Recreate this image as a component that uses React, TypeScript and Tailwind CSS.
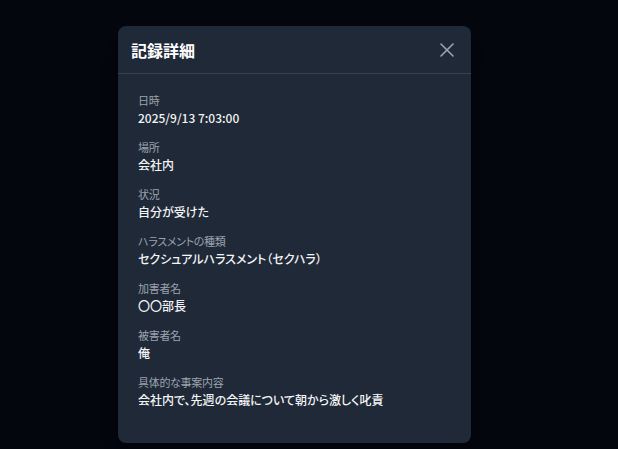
import React from 'react';
import { X } from 'lucide-react';

const rows = [
  { label: '日時', value: '2025/9/13 7:03:00' },
  { label: '場所', value: '会社内' },
  { label: '状況', value: '自分が受けた' },
  { label: 'ハラスメントの種類', value: 'セクシュアルハラスメント（セクハラ）' },
  { label: '加害者名', value: '〇〇部長' },
  { label: '被害者名', value: '俺' },
  { label: '具体的な事案内容', value: '会社内で、先週の会議について朝から激しく叱責' },
];

export default function App() {
  return (
    <div
      className="h-screen w-full bg-[#03060c] pt-[26px] pl-[118px] [font-feature-settings:'palt']"
      style={{ fontFamily: '"Noto Sans CJK JP", "Noto Sans", sans-serif' }}
    >
      <div className="w-[353px] rounded-lg bg-[#1f2937] shadow-xl">
        <div className="flex h-[48px] items-center justify-between border-b border-[#374151] pl-[13px] pr-[12px]">
          <h2 className="text-[16px] font-bold text-white">記録詳細</h2>
          <button className="text-[#9ca3af]">
            <X size={24} strokeWidth={1.6} />
          </button>
        </div>
        <div className="flex flex-col gap-3 px-5 pt-[19px] pb-[33px]">
          {rows.map((r) => (
            <div key={r.label} className="flex flex-col">
              <span className="text-[11px] leading-[15px] tracking-[-0.3px] text-[#9ca3af]">{r.label}</span>
              <span className="text-[12px] font-medium leading-[20px] text-[#f3f4f6]">{r.value}</span>
            </div>
          ))}
        </div>
      </div>
    </div>
  );
}
